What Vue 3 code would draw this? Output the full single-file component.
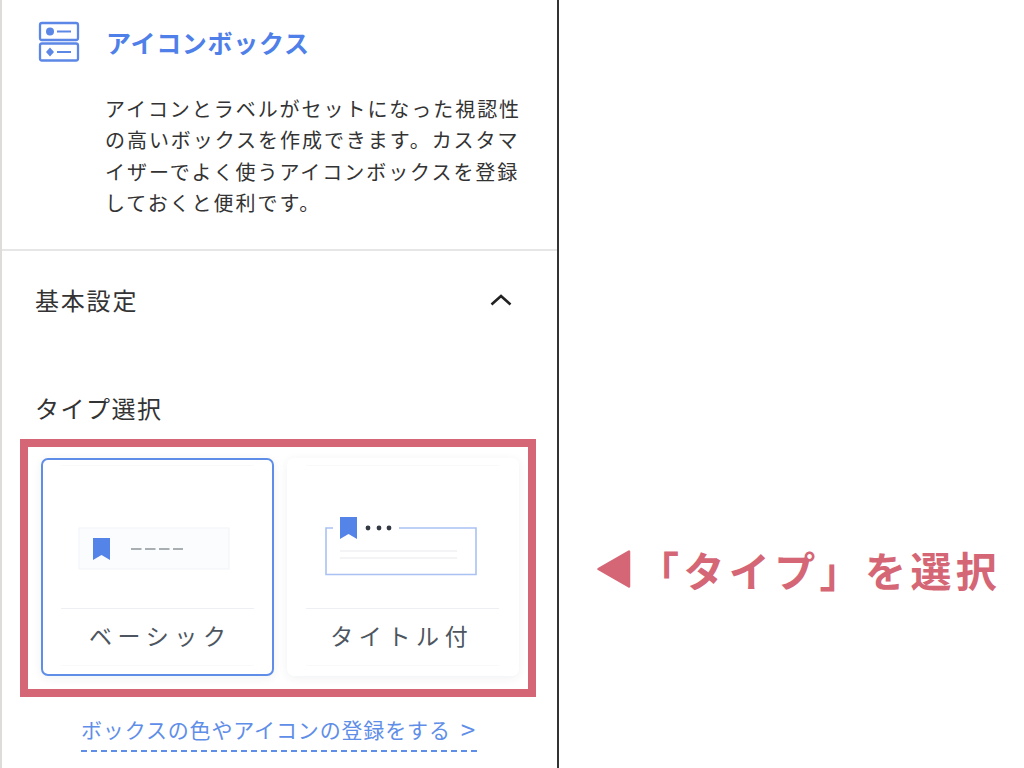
<template>
  <div class="page">
    <section class="panel">
      <header class="intro">
        <div class="intro-head">
          <svg class="block-icon" width="42" height="42" viewBox="0 0 42 42" fill="none">
            <rect x="2" y="2" width="38" height="17" rx="2" stroke="#5c87e6" stroke-width="2.3" />
            <rect x="2" y="22.5" width="38" height="17" rx="2" stroke="#5c87e6" stroke-width="2.3" />
            <circle cx="12" cy="10.5" r="4" fill="#5c87e6" />
            <line x1="19" y1="10.5" x2="33" y2="10.5" stroke="#5c87e6" stroke-width="2" />
            <path d="M12 26.5 L16 31 L12 35.5 L8 31 Z" fill="#5c87e6" />
            <line x1="19" y1="31" x2="33" y2="31" stroke="#5c87e6" stroke-width="2" />
          </svg>
          <h1 class="title">アイコンボックス</h1>
        </div>
        <p class="desc">アイコンとラベルがセットになった視認性の高いボックスを作成できます。カスタマイザーでよく使うアイコンボックスを登録しておくと便利です。</p>
      </header>

      <div class="settings">
        <div class="settings-head">
          <span>基本設定</span>
          <svg class="chevron" width="24" height="14" viewBox="0 0 24 14" fill="none">
            <path d="M2.5 11.5 L12 3 L21.5 11.5" stroke="#222" stroke-width="2.6" />
          </svg>
        </div>
        <div class="type-label">タイプ選択</div>

        <div class="type-box">
          <button v-for="t in types" :key="t.id" class="card" :class="{ selected: t.id === selected }" @click="selected = t.id">
            <span class="card-preview">
              <svg v-if="t.id === 'basic'" class="thumb-basic" width="160" height="44" viewBox="0 0 160 44">
                <rect x="2" y="1" width="150" height="41" fill="#fbfcfe" stroke="#f1f3f7" />
                <path d="M16 11 H33 V33 L24.5 28 L16 33 Z" fill="#5584e8" />
                <line x1="54" y1="22" x2="106" y2="22" stroke="#8e949b" stroke-width="1.6" stroke-dasharray="10.5 3.5" />
              </svg>
              <svg v-else class="thumb-title" width="160" height="62" viewBox="0 0 160 62">
                <path d="M10 13 H3 V59.5 H153 V13 H76" fill="none" stroke="#a9c1f3" stroke-width="1.6" />
                <path d="M17 2 H34 V24 L25.5 19 L17 24 Z" fill="#5584e8" />
                <circle cx="45" cy="13" r="2.4" fill="#333a44" />
                <circle cx="56" cy="13" r="2.4" fill="#333a44" />
                <circle cx="66" cy="13" r="2.4" fill="#333a44" />
                <line x1="17" y1="36" x2="134" y2="36" stroke="#f1f1f4" stroke-width="1.6" />
                <line x1="17" y1="43" x2="134" y2="43" stroke="#f1f1f4" stroke-width="1.6" />
              </svg>
            </span>
            <span class="card-label">{{ t.label }}</span>
          </button>
        </div>

        <div class="link-row">
          <a class="link">ボックスの色やアイコンの登録をする<span class="link-arrow">&gt;</span></a>
        </div>
      </div>
    </section>

    <aside class="note">
      <svg width="36" height="40" viewBox="0 0 36 40">
        <path d="M33 2.5 V37.5 L2.5 20 Z" fill="#d56675" stroke="#d56675" stroke-width="2.5" stroke-linejoin="round" />
      </svg>
      <span class="note-text">「タイプ」を選択</span>
    </aside>
  </div>
</template>

<script setup>
import { ref } from 'vue'

const types = [
  { id: 'basic', label: 'ベーシック' },
  { id: 'title', label: 'タイトル付' },
]

const selected = ref('basic')
</script>

<style>
html,
body {
  margin: 0;
  background: #fff;
}
</style>

<style scoped>
.page {
  display: flex;
  width: 1024px;
  height: 768px;
  overflow: hidden;
  background: #fff;
  font-family: "Noto Sans CJK JP", sans-serif;
  color: #333;
}

.panel {
  width: 559px;
  height: 768px;
  box-sizing: border-box;
  flex: none;
  border-left: 2px solid #dedcda;
  border-right: 2px solid #333;
}

.intro {
  height: 251px;
  box-sizing: border-box;
  border-bottom: 2px solid #e6e6e6;
  padding: 21px 0 0 36px;
}

.intro-head {
  display: flex;
  align-items: flex-start;
  gap: 26px;
}

.block-icon {
  flex: none;
}

.title {
  margin: 0 0 4px;
  font-size: 25px;
  line-height: 42px;
  font-weight: 700;
  letter-spacing: 0.7px;
  color: #4f7fe8;
}

.desc {
  margin: 26px 0 0 67px;
  width: 422px;
  font-size: 20px;
  line-height: 31.3px;
  letter-spacing: 1.95px;
  color: #333;
}

.settings {
  padding: 0 0 0 18px;
}

.settings-head {
  display: flex;
  align-items: center;
  justify-content: space-between;
  height: 100px;
  box-sizing: border-box;
  padding: 0 44px 4px 15px;
  font-size: 24px;
  letter-spacing: 1.8px;
}

.chevron {
  margin-top: 2px;
}

.type-label {
  height: 88px;
  box-sizing: border-box;
  margin-left: 15px;
  padding-top: 39px;
  font-size: 24px;
  line-height: 36px;
  letter-spacing: 1.5px;
}

.type-box {
  display: flex;
  gap: 13px;
  box-sizing: border-box;
  width: 516px;
  height: 258px;
  padding: 11px 9px 13px 13px;
  border: 8.5px solid #d56675;
}

.card {
  display: flex;
  flex-direction: column;
  align-items: center;
  flex: 1;
  box-sizing: border-box;
  padding: 5px 0 0;
  background: #fff;
  border: 2px solid transparent;
  border-radius: 7px;
  box-shadow: 0 2px 10px rgba(40, 50, 80, 0.07);
  font-family: inherit;
  cursor: pointer;
}

.card.selected {
  border-color: #5f8ee8;
}

.card-preview {
  display: flex;
  align-items: flex-start;
  justify-content: center;
  width: 193px;
  height: 144px;
  box-sizing: border-box;
  border-top: 1px solid #f9f9fb;
  border-bottom: 1px solid #eeeff3;
}

.thumb-basic {
  margin-top: 61px;
}

.thumb-title {
  margin-top: 49px;
}

.card-label {
  width: 193px;
  height: 57px;
  box-sizing: border-box;
  padding: 9px 0 0 6px;
  border-bottom: 1px solid #f9f9fb;
  font-size: 23px;
  line-height: 34px;
  letter-spacing: 5.6px;
  text-align: center;
  color: #4d5660;
}

.card:last-child .card-label {
  padding: 9px 2px 0 0;
}

.link-row {
  display: flex;
  margin: 14px 0 0 61px;
}

.link {
  display: flex;
  align-items: center;
  padding-bottom: 3px;
  border-bottom: 2px dashed #5f8ee8;
  font-size: 21px;
  line-height: 36px;
  letter-spacing: 0.85px;
  color: #5f8ee8;
}

.link-arrow {
  margin: 0 2px 0 10px;
  font-size: 26px;
  letter-spacing: 0;
}

.note {
  display: flex;
  align-items: center;
  align-self: flex-start;
  gap: 6px;
  margin: 547px 0 0 37px;
}

.note-text {
  font-size: 41px;
  line-height: 44px;
  font-weight: 700;
  letter-spacing: 4.4px;
  color: #d56675;
  white-space: nowrap;
}
</style>
